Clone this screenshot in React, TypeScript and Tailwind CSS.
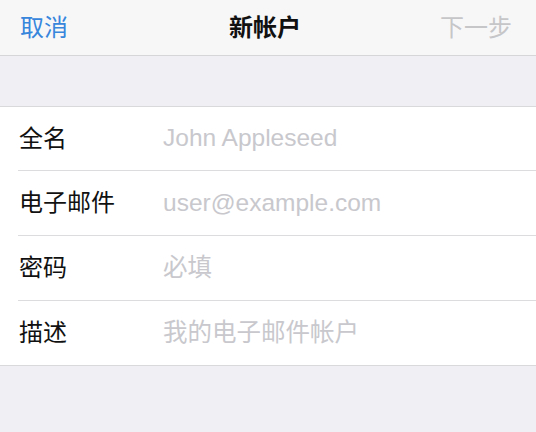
import React from 'react';

const fields = [
    { label: '全名', placeholder: 'John Appleseed', h: 'h-[64px]' },
    { label: '电子邮件', placeholder: 'user@example.com', h: 'h-[65px]' },
    { label: '密码', placeholder: '必填', h: 'h-[65px]' },
    { label: '描述', placeholder: '我的电子邮件帐户', h: 'h-[64px]' },
];

const font = { fontFamily: '"Liberation Sans", "Noto Sans CJK SC", sans-serif' };

const App: React.FC = () => {
    return (
        <div className="w-[536px] h-[432px] bg-[#efeff4] overflow-hidden" style={font}>
            <div className="h-[56px] bg-[#f7f7f8] border-b border-[#d6d6d8] flex items-center justify-between px-[20px] relative">
                <span className="text-[24px] text-[#3786dc]">取消</span>
                <span className="absolute left-[265px] -translate-x-1/2 text-[24px] font-semibold text-[#111]">新帐户</span>
                <span className="text-[24px] text-[#c6c6c8] pr-[4px]">下一步</span>
            </div>
            <div className="h-[50px]" />
            <div className="bg-white border-t border-b border-[#d9d9dc]">
                {fields.map((f, i) => (
                    <div key={f.label} className="pl-[18px]">
                        <div className={`${f.h} flex items-center ${i < fields.length - 1 ? 'border-b border-[#dcdcdf]' : ''}`}>
                            <span className="w-[145px] text-[24px] text-[#111] pl-[1px]">{f.label}</span>
                            <span className="text-[24.5px] text-[#c8c8cd]">{f.placeholder}</span>
                        </div>
                    </div>
                ))}
            </div>
        </div>
    );
};

export default App;
